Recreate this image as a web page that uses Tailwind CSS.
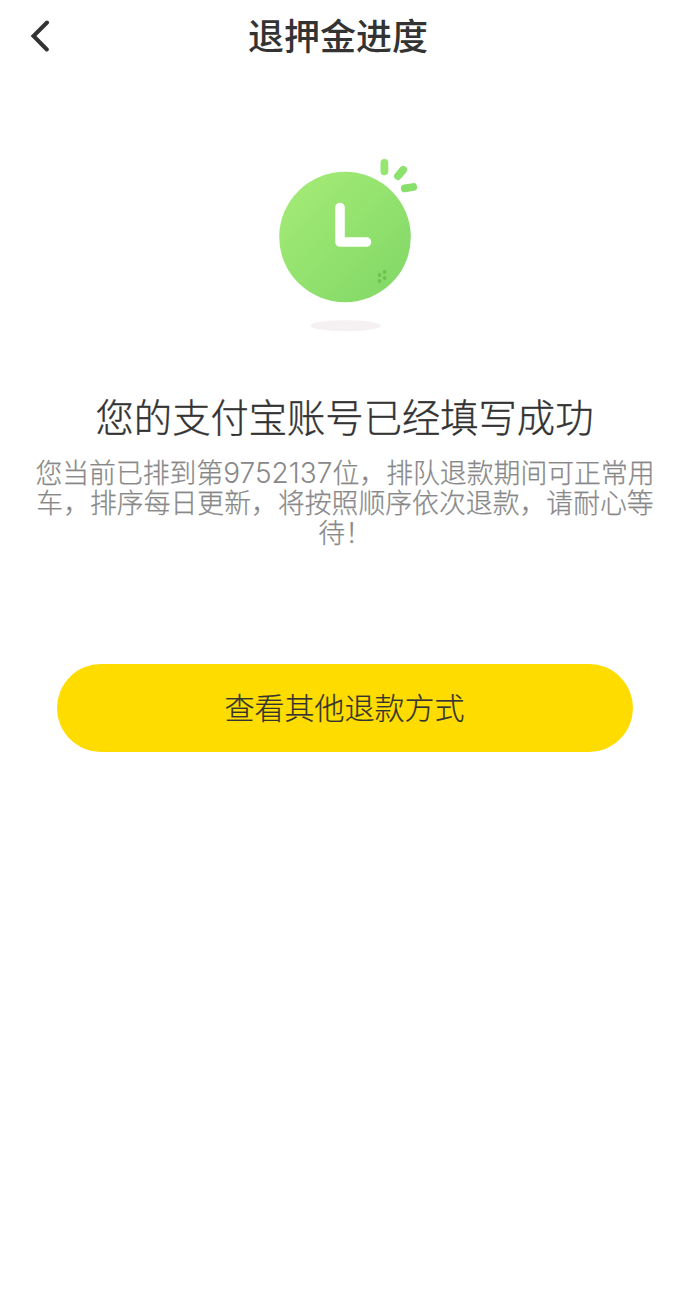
<!DOCTYPE html>
<html lang="zh-CN">
<head>
<meta charset="utf-8">
<title>退押金进度</title>
<script src="https://cdn.jsdelivr.net/npm/@tailwindcss/browser@4"></script>
</head>
<body class="bg-white font-['Noto_Sans_CJK_SC',sans-serif] text-[#333333]">
<main class="flex h-[1305px] w-[690px] flex-col overflow-hidden">
  <header class="grid h-[72px] shrink-0 grid-cols-[60px_556px_74px] items-center">
    <button aria-label="返回" class="flex h-full items-center pl-[29px]">
      <svg class="h-8 w-6" viewBox="0 0 24 32" fill="none" stroke="#333" stroke-width="4" stroke-linecap="round"><path d="M18 2.500 4.500 16 17.800 29.500"/></svg>
    </button>
    <h1 class="h-[72px] text-center text-[36px] leading-[68px] font-medium">退押金进度</h1>
  </header>
  <svg class="mt-[78px] ml-[265px] h-[190px] w-[165px] shrink-0" viewBox="265 150 165 190">
    <defs><linearGradient id="g" x1="0" y1="0" x2="1" y2="1"><stop offset="0.100" stop-color="#a3ea76"/><stop offset="0.900" stop-color="#83d967"/></linearGradient></defs>
    <ellipse cx="345.500" cy="325.700" rx="35" ry="5.500" fill="#f5f0f2"/>
    <ellipse cx="345" cy="237" rx="65.800" ry="65.200" fill="url(#g)"/>
    <path d="M340 207.500V242H366.500" fill="none" stroke="#fff" stroke-width="9.600" stroke-linecap="round" stroke-linejoin="round"/>
    <g fill="none" stroke-width="7.800" stroke-linecap="round"><path d="M384.400 163V171.300" stroke="#97e571"/><path d="M398 176 403.200 169.800" stroke="#8de16d"/><path d="M404.800 188.300 413.200 187" stroke="#88df6b"/></g>
    <g fill="#6fc153"><circle cx="384.700" cy="272" r="1.900"/><circle cx="379.500" cy="275" r="1.900"/><circle cx="384.700" cy="278" r="1.900"/><circle cx="379.500" cy="281" r="1.900"/></g>
  </svg>
  <h2 class="mt-[52px] h-[48px] shrink-0 pr-[1px] text-center text-[38.300px] leading-[47px] font-light whitespace-nowrap [-webkit-text-stroke:0.35px_#333]">您的支付宝账号已经填写成功</h2>
  <p class="mt-[18px] h-[90px] shrink-0 text-center font-['Inter','Noto_Sans_CJK_SC',sans-serif] text-[26.850px] leading-[30px] font-light whitespace-nowrap text-[#888888] [-webkit-text-stroke:0.25px_#888]">您当前已排到第<span class="text-[28px] leading-[0] [-webkit-text-stroke:0]">9752137</span>位，排队退款期间可正常用<br>车，排序每日更新，将按照顺序依次退款，请耐心等<br>待！</p>
  <button class="mt-[116px] ml-[57px] h-[88px] w-[576px] shrink-0 rounded-full bg-[#ffdc00] text-[30px] font-light [-webkit-text-stroke:0.2px_#333]"><span class="block pr-[1px] pb-[4px]">查看其他退款方式</span></button>
</main>
</body>
</html>
